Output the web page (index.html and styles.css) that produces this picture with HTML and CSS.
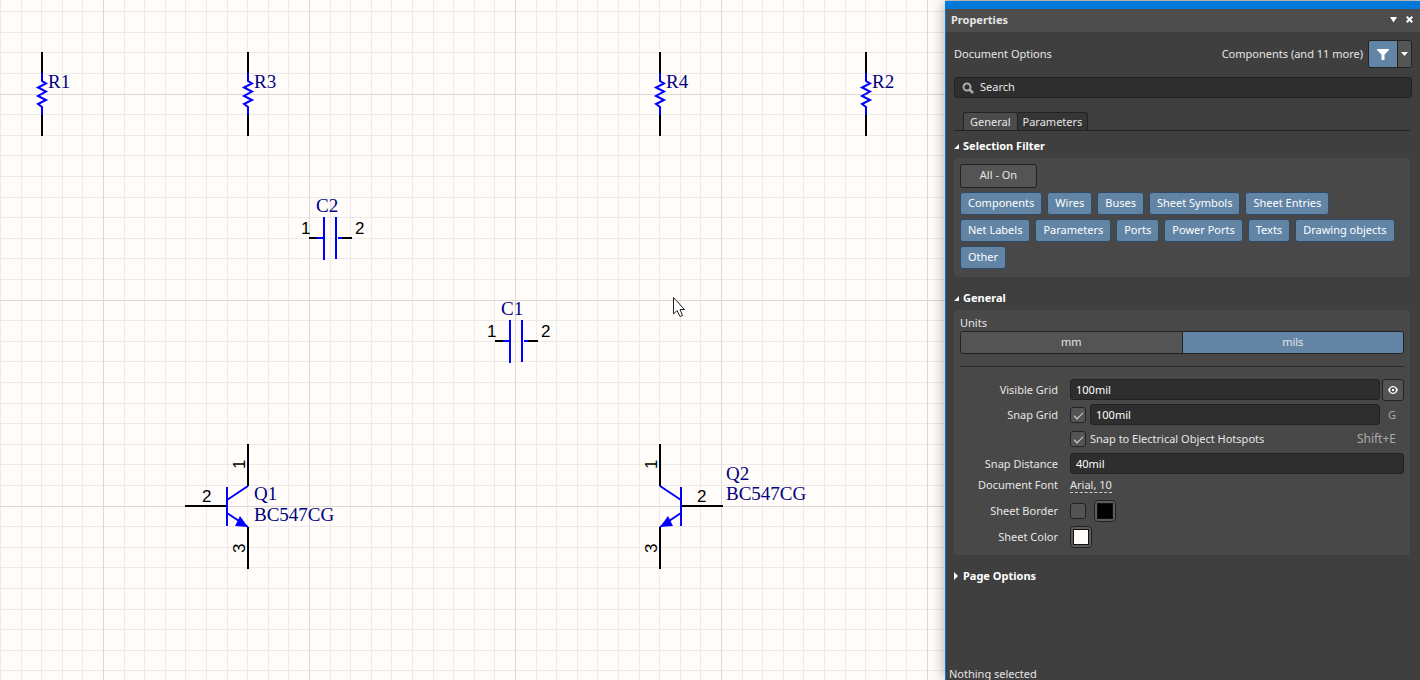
FILE: index.html
```html
<!DOCTYPE html>
<html lang="en">
<head>
<meta charset="utf-8">
<title>Schematic editor</title>
<link rel="stylesheet" href="styles.css">
</head>
<body>
<div class="app">
  <main class="sheet">
    <svg class="drawing" role="img" aria-label="Schematic">
      <defs>
        <pattern id="grid" x="103" y="94" width="206" height="206" patternUnits="userSpaceOnUse">
          <path class="grid-minor" d="M21.5 0V206M41.5 0V206M62.5 0V206M82.5 0V206M103.5 0V206M124.5 0V206M144.5 0V206M165.5 0V206M185.5 0V206M0 20.5H206M0 41.5H206M0 61.5H206M0 82.5H206M0 103.5H206M0 123.5H206M0 144.5H206M0 164.5H206M0 185.5H206"/>
          <path class="grid-major" d="M.5 0V206M0 .5H206"/>
        </pattern>
        <g id="resistor">
          <path class="pin" d="M0 -42V-21M0 21V42"/>
          <path class="body" d="M0 -21V-13L4 -10.500L-4 -6.500L4 -2.500L-4 2L4 6L-4 10L0 13V21"/>
        </g>
        <g id="capacitor">
          <path class="pin" d="M-21 0H-13M12 0H22"/>
          <path class="body" d="M-13 0H-6M8 0H12M-6 -21V22M6 -21V21"/>
        </g>
        <g id="transistor">
          <path class="pin" d="M0 -62V-20M0 21V63M-63 0H-21"/>
          <path class="body" d="M-21 -19V20M-21 -6L0 -20M-21 7L0 21"/>
          <path class="arrow" d="M0 21L-8 10L-13 20Z"/>
        </g>
      </defs>
      <rect width="100%" height="100%" fill="url(#grid)"/>
      <use href="#resistor" x="42" y="94"/><text class="ref" x="48" y="88">R1</text>
      <use href="#resistor" x="248" y="94"/><text class="ref" x="254" y="88">R3</text>
      <use href="#resistor" x="660" y="94"/><text class="ref" x="666" y="88">R4</text>
      <use href="#resistor" x="866" y="94"/><text class="ref" x="872" y="88">R2</text>

      <use href="#capacitor" x="330" y="238"/>
      <text class="ref" x="316" y="212">C2</text>
      <text class="num" x="301" y="234">1</text><text class="num" x="355" y="234">2</text>
      <use href="#capacitor" x="516" y="341"/>
      <text class="ref" x="501" y="315">C1</text>
      <text class="num" x="487" y="337">1</text><text class="num" x="541" y="337">2</text>

      <use href="#transistor" x="248" y="506"/>
      <text class="ref" x="254" y="500">Q1</text><text class="ref" x="254" y="521">BC547CG</text>
      <text class="num" x="202" y="502">2</text>
      <text class="num" transform="translate(245 469) rotate(-90)">1</text>
      <text class="num" transform="translate(245 553) rotate(-90)">3</text>

      <use href="#transistor" transform="translate(660 506) scale(-1 1)"/>
      <text class="ref" x="726" y="480">Q2</text><text class="ref" x="726" y="500">BC547CG</text>
      <text class="num" x="697" y="502">2</text>
      <text class="num" transform="translate(657 469) rotate(-90)">1</text>
      <text class="num" transform="translate(657 553) rotate(-90)">3</text>

      <path class="cursor" d="M673.500 297.500V314L677 310.500L680 316.500L682.500 315.500L680 309.500H684.500Z"/>
    </svg>
  </main>

  <aside class="panel">
    <header class="titlebar">
      <h1 class="title">Properties</h1>
      <button class="plain" aria-label="Panel menu"><svg width="8" height="6"><path fill="#fff" d="M0 0H7L3.500 5.500Z"/></svg></button>
      <button class="plain" aria-label="Close"><svg width="7" height="7"><path stroke="#fff" stroke-width="2" d="M.7 .7L6.300 6.300M6.300 .7L.7 6.300"/></svg></button>
    </header>

    <div class="content">
      <div class="scope">
        <span class="scope-name">Document Options</span>
        <span>Components (and 11 more)</span>
        <div class="split">
          <button class="split-main" aria-label="Filter"><svg width="12" height="11"><path fill="#fff" d="M0 0H12V1L7.500 5.500V11H4.500V5.500L0 1Z"/></svg></button>
          <button class="split-more" aria-label="Filter menu"><svg width="7" height="4"><path fill="#fff" d="M0 0H7L3.500 4Z"/></svg></button>
        </div>
      </div>

      <label class="search">
        <svg width="12" height="12"><circle cx="5" cy="5" r="3.500" fill="none" stroke="#aaa" stroke-width="2"/><path stroke="#aaa" stroke-width="2.500" d="M7.500 7.500L11 11"/></svg>
        <input class="search-box" type="text" placeholder="Search" aria-label="Search">
      </label>

      <div class="tabs" role="tablist">
        <button class="tab tab-on" role="tab" aria-selected="true">General</button>
        <button class="tab" role="tab" aria-selected="false">Parameters</button>
      </div>

      <h2 class="heading"><svg width="5" height="5"><path fill="#fff" d="M5 0V5H0Z"/></svg>Selection Filter</h2>
      <section class="group filter">
        <button class="all">All - On</button>
        <div class="chips">
          <button class="chip">Components</button>
          <button class="chip">Wires</button>
          <button class="chip">Buses</button>
          <button class="chip">Sheet Symbols</button>
          <button class="chip">Sheet Entries</button>
          <button class="chip">Net Labels</button>
          <button class="chip">Parameters</button>
          <button class="chip">Ports</button>
          <button class="chip">Power Ports</button>
          <button class="chip">Texts</button>
          <button class="chip">Drawing objects</button>
          <button class="chip">Other</button>
        </div>
      </section>

      <h2 class="heading heading-next"><svg width="5" height="5"><path fill="#fff" d="M5 0V5H0Z"/></svg>General</h2>
      <section class="group general">
        <div class="units">Units</div>
        <div class="segment">
          <button class="seg">mm</button>
          <button class="seg seg-on">mils</button>
        </div>
        <hr class="rule">

        <div class="row">
          <label class="name" for="visible">Visible Grid</label>
          <input class="field" id="visible" type="text" value="100mil">
          <button class="eye" aria-label="Toggle visible grid"><svg width="10" height="8"><path fill="#fff" d="M0 4Q2 0 5 0T10 4Q8 8 5 8T0 4Z"/><circle cx="5" cy="4" r="2" fill="#fff" stroke="#444" stroke-width="1.500"/></svg></button>
        </div>
        <div class="row">
          <label class="name" for="snap">Snap Grid</label>
          <input class="check" type="checkbox" checked aria-label="Snap grid on">
          <input class="field" id="snap" type="text" value="100mil">
          <span class="key">G</span>
        </div>
        <div class="row row-short">
          <span class="name"></span>
          <input class="check" id="hotspots" type="checkbox" checked>
          <label class="grow" for="hotspots">Snap to Electrical Object Hotspots</label>
          <span class="key key-wide">Shift+E</span>
        </div>
        <div class="row">
          <label class="name" for="distance">Snap Distance</label>
          <input class="field" id="distance" type="text" value="40mil">
        </div>
        <div class="row row-font">
          <span class="name">Document Font</span>
          <a class="font" href="#">Arial, 10</a>
        </div>
        <div class="row row-color">
          <label class="name" for="border">Sheet Border</label>
          <input class="check" id="border" type="checkbox">
          <button class="swatch swatch-after" aria-label="Border color"><span class="ink ink-black"></span></button>
        </div>
        <div class="row row-color">
          <span class="name">Sheet Color</span>
          <button class="swatch" aria-label="Sheet color"><span class="ink ink-white"></span></button>
        </div>
      </section>

      <h2 class="heading heading-last"><svg width="5" height="8"><path fill="#fff" d="M0 0L4 4L0 8Z"/></svg>Page Options</h2>
    </div>
    <footer class="status">Nothing selected</footer>
  </aside>
</div>
</body>
</html>
```
FILE: styles.css
```css
* { box-sizing: border-box; }
body { margin: 0; }
.app {
  display: flex;
  height: 100vh;
  overflow: hidden;
  background: #d8d5d2;
  color: #e6e6e6;
  font: 11px/16px "Noto Sans", sans-serif;
}
button, input { font: inherit; color: inherit; margin: 0; padding: 0; }
button { display: flex; align-items: center; justify-content: center; }
svg { display: block; flex: none; }

.sheet { flex: 1; min-width: 0; overflow: hidden; background: #fffcf9; }
.drawing { width: 100%; height: 100%; }
.grid-minor, .grid-major { fill: none; shape-rendering: crispEdges; }
.grid-minor { stroke: #edebe9; }
.grid-major { stroke: #dbd8d6; }
.pin { fill: none; stroke: #000; stroke-width: 2; }
.body { fill: none; stroke: #00f; stroke-width: 2; }
.arrow { fill: #00f; }
.ref { fill: #000080; font: 19px "Liberation Serif", serif; }
.num { fill: #000; font: 17px "Liberation Sans", sans-serif; }
.cursor { fill: #fff; stroke: #222; }

.panel {
  display: flex;
  flex-direction: column;
  flex: 0 0 475px;
  margin-top: 1px;
  border-top: 8px solid #0078d7;
  border-left: 1px solid #0078d7;
  background: #3f3f3f;
  box-shadow: 0 0 14px rgba(0, 0, 0, 0.35);
  z-index: 1;
}
.titlebar {
  display: flex;
  align-items: center;
  gap: 8px;
  height: 23px;
  padding: 0 7px 2px 5px;
  background: #4d4d4d;
}
.title { flex: 1; margin: 0; font-size: 11px; }
.plain { border: 0; background: none; }
.content { padding: 8px 8px 0; }

.scope { display: flex; align-items: center; gap: 5px; }
.scope-name { flex: 1; }
.split {
  display: flex;
  height: 28px;
  border: 1px solid #222;
  border-radius: 3px;
  overflow: hidden;
}
.split-main { width: 28px; border: 0; background: #6285a6; }
.split-more { width: 14px; border: 0; border-left: 1px solid #222; background: #555; }

.search, .field {
  height: 21px;
  border: 1px solid #222;
  border-radius: 3px;
  background: #2e2e2e;
}
.search {
  display: flex;
  align-items: center;
  gap: 6px;
  margin-top: 9px;
  padding-left: 7px;
}
.search-box { flex: 1; min-width: 0; height: 19px; padding-bottom: 2px; border: 0; outline: 0; background: none; }
.search-box::placeholder { color: #e6e6e6; opacity: 1; }

.tabs {
  display: flex;
  margin: 14px 2px 0 0;
  padding-left: 9px;
  border-bottom: 1px solid #222;
}
.tab {
  height: 18px;
  padding: 0 5px;
  border: 1px solid #222;
  border-width: 1px 1px 0 0;
  border-radius: 0 3px 0 0;
  background: #353535;
}
.tab-on { padding: 0 6px; border-left-width: 1px; border-radius: 3px 3px 0 0; background: #4b4b4b; }

.heading {
  display: flex;
  align-items: center;
  gap: 4px;
  margin: 7px 0 4px;
  color: #fff;
  font-size: 11px;
}
.heading-next { margin-top: 13px; }
.heading-last { margin-top: 13px; }
.group {
  margin-right: 2px;
  padding: 6px;
  border-radius: 3px;
  background: #484848;
}
.filter { padding-bottom: 8px; }
.all {
  width: 77px;
  height: 24px;
  padding-bottom: 2px;
  border: 1px solid #222;
  border-radius: 3px;
  background: #545454;
}
.chips { display: flex; flex-wrap: wrap; gap: 4px 5px; margin-top: 4px; }
.chip {
  height: 23px;
  padding: 0 7px 1px;
  border: 1px solid #2f4a68;
  border-radius: 3px;
  background: #6285a6;
  color: #fff;
}

.general { padding: 5px 6px; }
.segment {
  display: flex;
  height: 23px;
  border: 1px solid #222;
  border-radius: 3px;
  overflow: hidden;
}
.seg { flex: 1; padding-bottom: 2px; border: 0; background: #545454; }
.seg-on { border-left: 1px solid #222; background: #6285a6; }
.rule { margin: 12px 0 10px; border: 0; border-top: 1px solid #2b2b2b; }

.row { display: flex; align-items: center; gap: 4px; height: 25px; }
.row-short { height: 24px; }
.row-font { align-items: flex-start; height: 22px; padding-top: 1px; }
.row-color { height: 26px; }
.name { width: 98px; margin-right: 8px; text-align: right; }
.field { flex: 1; min-width: 0; padding: 0 5px; color: #fff; }
.eye {
  width: 22px;
  height: 22px;
  margin-left: -2px;
  border: 1px solid #222;
  border-radius: 3px;
  background: #545454;
}
.check {
  appearance: none;
  width: 16px;
  height: 16px;
  border: 1px solid #222;
  border-radius: 3px;
  background: #545454;
}
.check:checked::after {
  content: "";
  display: block;
  width: 8px;
  height: 4px;
  margin: 4px 3px;
  border: solid #ddd;
  border-width: 0 0 1px 1px;
  transform: rotate(-45deg);
}
.key { width: 20px; padding-right: 8px; text-align: right; color: #aaa; }
.key-wide { width: auto; font-size: 12px; }
.grow { flex: 1; }
.font { border-bottom: 1px dashed #ccc; color: inherit; line-height: 15px; text-decoration: none; }
.swatch {
  width: 22px;
  height: 22px;
  border: 1px solid #222;
  border-radius: 4px;
  background: #5c5c5c;
}
.swatch-after { margin-left: 4px; }
.ink { width: 16px; height: 16px; border: 1px solid #111; }
.ink-black { background: #000; }
.ink-white { background: #fffcf9; }
.status { margin-top: auto; padding-left: 3px; line-height: 12px; }
```
